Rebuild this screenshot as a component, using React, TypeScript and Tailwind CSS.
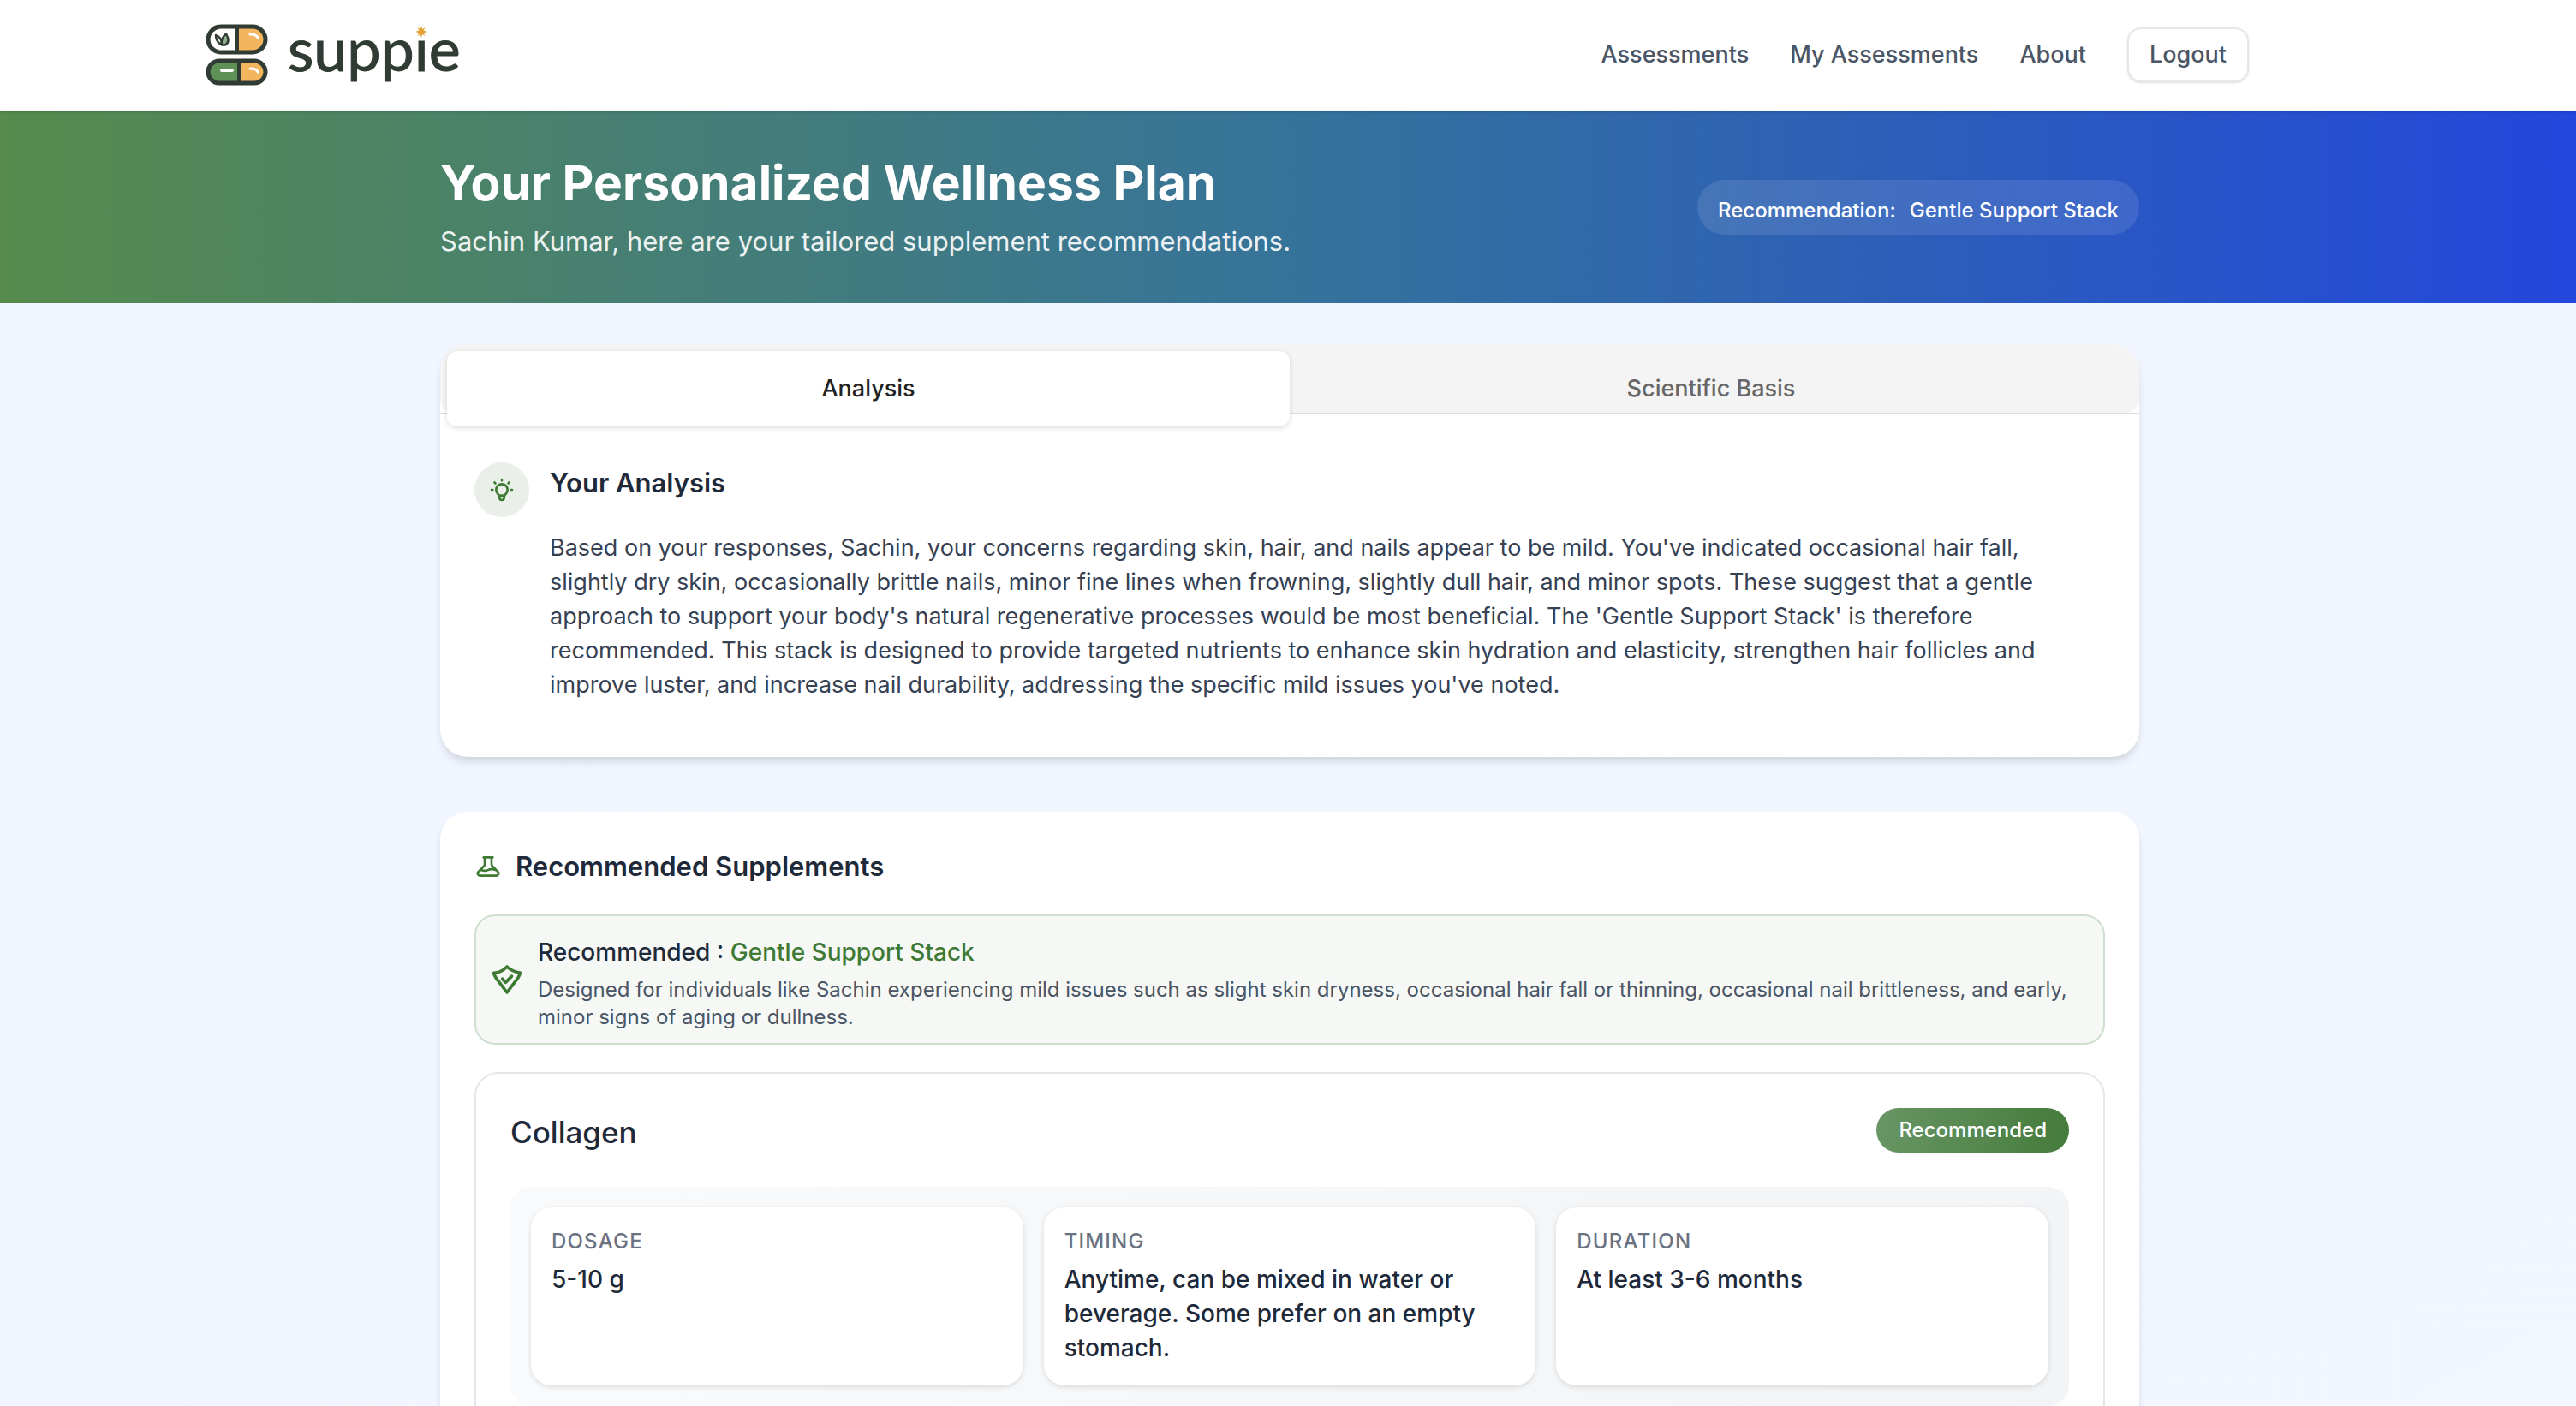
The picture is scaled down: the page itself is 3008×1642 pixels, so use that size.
import React, { useState } from 'react';
import { HiOutlineBeaker, HiOutlineLightBulb } from 'react-icons/hi';

interface Fact {
  label: string;
  value: string;
}

interface Supplement {
  name: string;
  badge: string;
  facts: Fact[];
}

const NAV_LINKS = ['Assessments', 'My Assessments', 'About'];

const TABS = ['Analysis', 'Scientific Basis'];

const STACK_NAME = 'Gentle Support Stack';

const SUPPLEMENTS: Supplement[] = [
  {
    name: 'Collagen',
    badge: 'Recommended',
    facts: [
      { label: 'Dosage', value: '5-10 g' },
      { label: 'Timing', value: 'Anytime, can be mixed in water or beverage. Some prefer on an empty stomach.' },
      { label: 'Duration', value: 'At least 3-6 months' },
    ],
  },
];

const cardClass = 'rounded-[32px] bg-white shadow-[0_8px_12px_-2px_rgba(0,0,0,0.1),0_4px_8px_-4px_rgba(0,0,0,0.1)]';

// Two capsules, a leaf in the upper one
const PillsIcon = () => (
  <svg className="h-[72px] w-[74px] shrink-0" viewBox="0 0 74 72" fill="none" aria-hidden="true">
    <rect x="3" y="3" width="67" height="30" rx="15" fill="#ffffff" />
    <path d="M37 3h18a15 15 0 0 1 0 30H37z" fill="#f4b55f" />
    <rect x="3" y="3" width="67" height="30" rx="15" stroke="#2f3b33" strokeWidth="5" />
    <path d="M36.500 3v30" stroke="#2f3b33" strokeWidth="5" />
    <path d="M52 12c5 0 8 1 9 4" stroke="#ffffff" strokeWidth="3" strokeLinecap="round" />
    <path d="M19 24c-5-2-7-6-7-11 5 2 7 6 7 11z" stroke="#2f3b33" strokeWidth="2.400" strokeLinejoin="round" />
    <path d="M19 24.500c-1-6 1-10 5-13 3 5 4 10-1 13z" fill="#8fb08a" stroke="#2f3b33" strokeWidth="2.400" strokeLinejoin="round" />
    <rect x="3" y="43" width="67" height="26" rx="13" fill="#5f9157" />
    <path d="M40 43h17a13 13 0 0 1 0 26H40z" fill="#f4b55f" />
    <rect x="3" y="43" width="67" height="26" rx="13" stroke="#2f3b33" strokeWidth="5" />
    <path d="M39.500 43v26" stroke="#2f3b33" strokeWidth="5" />
    <path d="M19 54h12" stroke="#ffffff" strokeWidth="4" strokeLinecap="round" />
    <path d="M52 52c5 0 8 1 9 4" stroke="#ffffff" strokeWidth="3" strokeLinecap="round" />
  </svg>
);

// Sits over the dotless i of the wordmark
const StarIcon = () => (
  <svg className="absolute top-4 left-1/2 size-[14px] -translate-x-1/2" viewBox="0 0 24 24" fill="#e3a233" aria-hidden="true">
    <path d="M12 0l2 7 6-3.500L16.500 9.500 24 12l-7.500 2.500L20 20.500 14 17l-2 7-2-7-6 3.500 3.500-6L0 12l7.500-2.500L4 3.500 10 7z" />
  </svg>
);

const ShieldIcon = () => (
  <svg className="h-10 w-10 shrink-0 text-[#3f7a35]" viewBox="0 0 24 24" fill="none" stroke="currentColor" strokeWidth="2.200" strokeLinecap="round" strokeLinejoin="round" aria-hidden="true">
    <path d="M12 3C9.500 5.600 6.500 7.200 2.800 7.400 3 8.600 3.500 9.600 4.200 10.700L12 21l7.800-10.300c.8-1.200 1.400-2.300 1.400-3.500C17.500 6.900 14.500 5.400 12 3z" />
    <path d="M8.800 11.500l2.200 2.500 4.300-4.300" />
  </svg>
);

const Header = () => (
  <header className="relative border-b-2 border-gray-100 bg-white pl-1 shadow-sm">
    <div className="mx-auto flex max-w-[2240px] items-center justify-between py-8">
      <a href="#" aria-label="suppie" className="-my-4 -ml-[146px] flex items-center gap-[22px]">
        <PillsIcon />
        <span className="pb-4 font-[Lato,sans-serif] text-[70px] leading-[72px] text-[#2f3b33] [-webkit-text-stroke:1px_#2f3b33]">
          supp<span className="relative">ı<StarIcon /></span>e
        </span>
      </a>
      <nav className="flex items-center gap-12 text-[27px] leading-10 font-medium text-gray-600">
        {NAV_LINKS.map(link => <a key={link} href="#">{link}</a>)}
        <button type="button" className="h-16 rounded-2xl border-2 border-gray-200 bg-white px-6 shadow-sm">Logout</button>
      </nav>
    </div>
  </header>
);

const Hero = () => (
  <section className="bg-linear-to-r/srgb from-[#568b4d] via-[#36739a] to-[#2347dc] py-12 pl-1 text-white">
    <div className="mx-auto flex max-w-[2048px] items-center justify-between px-8">
      <div>
        <h1 className="text-[57px] leading-[72px] font-bold">Your Personalized Wellness Plan</h1>
        <p className="mt-2 text-[31px] leading-[48px] text-white/90">Sachin Kumar, here are your tailored supplement recommendations.</p>
      </div>
      <div className="flex gap-4 rounded-full bg-white/10 px-6 pt-5 pb-3 text-[24px] leading-8 font-medium">
        <span>Recommendation:</span>
        <span>{STACK_NAME}</span>
      </div>
    </div>
  </section>
);

const AnalysisCard = () => {
  const [activeTab, setActiveTab] = useState(TABS[0]);

  return (
    <section className={cardClass}>
      <div className="h-[82px] border-b-2 border-[#dedede]">
        <div role="tablist" className="flex h-20 items-start rounded-t-[32px] rounded-b-2xl bg-[#f4f4f4] p-2">
          {TABS.map(tab => (
            <button
              key={tab}
              type="button"
              role="tab"
              aria-selected={tab === activeTab}
              onClick={() => setActiveTab(tab)}
              className={`h-[88px] flex-1 rounded-xl text-[27px] leading-10 font-medium ${tab === activeTab ? 'bg-white text-[#222222] shadow-[0_2px_6px_rgba(0,0,0,0.14)]' : 'text-[#666666]'}`}
            >
              {tab}
            </button>
          ))}
        </div>
      </div>
      <div className="flex items-start gap-6 px-10 pt-14 pb-16">
        <div className="flex size-16 shrink-0 items-center justify-center rounded-full bg-[#eaf0e9]">
          <HiOutlineLightBulb className="size-8 text-[#3f7a35]" />
        </div>
        <div className="pr-10">
          <h2 className="mb-8 text-[31px] leading-[48px] font-semibold text-gray-800">Your Analysis</h2>
          <p className="text-[27px] leading-10 text-gray-700">
            Based on your responses, Sachin, your concerns regarding skin, hair, and nails appear to be mild. You've indicated occasional hair fall, slightly dry skin, occasionally brittle nails, minor fine lines when frowning, slightly dull hair, and minor spots. These suggest that a gentle approach to support your body's natural regenerative processes would be most beneficial. The 'Gentle Support Stack' is therefore recommended. This stack is designed to provide targeted nutrients to enhance skin hydration and elasticity, strengthen hair follicles and improve luster, and increase nail durability, addressing the specific mild issues you've noted.
          </p>
        </div>
      </div>
    </section>
  );
};

const SupplementCard: React.FC<{ supplement: Supplement }> = ({ supplement }) => (
  <article className="mt-8 rounded-[28px] border-2 border-gray-200 bg-white p-10">
    <div className="mb-9 flex items-start justify-between">
      <h3 className="text-[35px] leading-[56px] font-medium text-gray-800">{supplement.name}</h3>
      <span className="rounded-full bg-linear-to-r from-[#689564] to-[#457b3b] px-[26px] py-[10px] text-[24px] leading-8 font-medium text-white">{supplement.badge}</span>
    </div>
    <dl className="grid grid-cols-3 gap-6 rounded-3xl bg-linear-to-r from-gray-50 to-gray-100 p-6">
      {supplement.facts.map(fact => (
        <div key={fact.label} className="rounded-3xl bg-white p-6 shadow-[0_2px_6px_rgba(0,0,0,0.12)]">
          <dt className="text-[24px] leading-8 font-medium tracking-wider text-gray-500 uppercase">{fact.label}</dt>
          <dd className="mt-2 text-[28px] leading-10 font-medium text-gray-800">{fact.value}</dd>
        </div>
      ))}
    </dl>
  </article>
);

const SupplementsCard = () => (
  <section className={`p-10 ${cardClass}`}>
    <h2 className="flex items-center gap-4 text-[31px] leading-[48px] font-semibold text-gray-800">
      <HiOutlineBeaker className="size-8 text-[#3f7a35]" />
      Recommended Supplements
    </h2>
    <div className="mt-8 flex items-center gap-4 rounded-3xl border-2 border-[#cfdfcf] bg-[#f5f8f5] px-4">
      <ShieldIcon />
      <div className="pt-[22px] pb-[14px]">
        <h3 className="text-[28px] leading-10 font-medium text-gray-800">
          Recommended : <span className="text-[#3f7a35]">{STACK_NAME}</span>
        </h3>
        <p className="mt-2 text-[24px] leading-8 text-gray-600">
          Designed for individuals like Sachin experiencing mild issues such as slight skin dryness, occasional hair fall or thinning, occasional nail brittleness, and early, minor signs of aging or dullness.
        </p>
      </div>
    </div>
    {SUPPLEMENTS.map(supplement => <SupplementCard key={supplement.name} supplement={supplement} />)}
  </section>
);

export default function App() {
  return (
    <div className="h-screen overflow-hidden bg-linear-to-br from-[#f0f5ff] to-[#f2f6ff] font-[Inter,sans-serif]">
      <Header />
      <Hero />
      <div className="pl-1">
        <main className="mx-auto flex max-w-[2048px] flex-col gap-16 px-8 py-12">
          <AnalysisCard />
          <SupplementsCard />
        </main>
      </div>
    </div>
  );
}
